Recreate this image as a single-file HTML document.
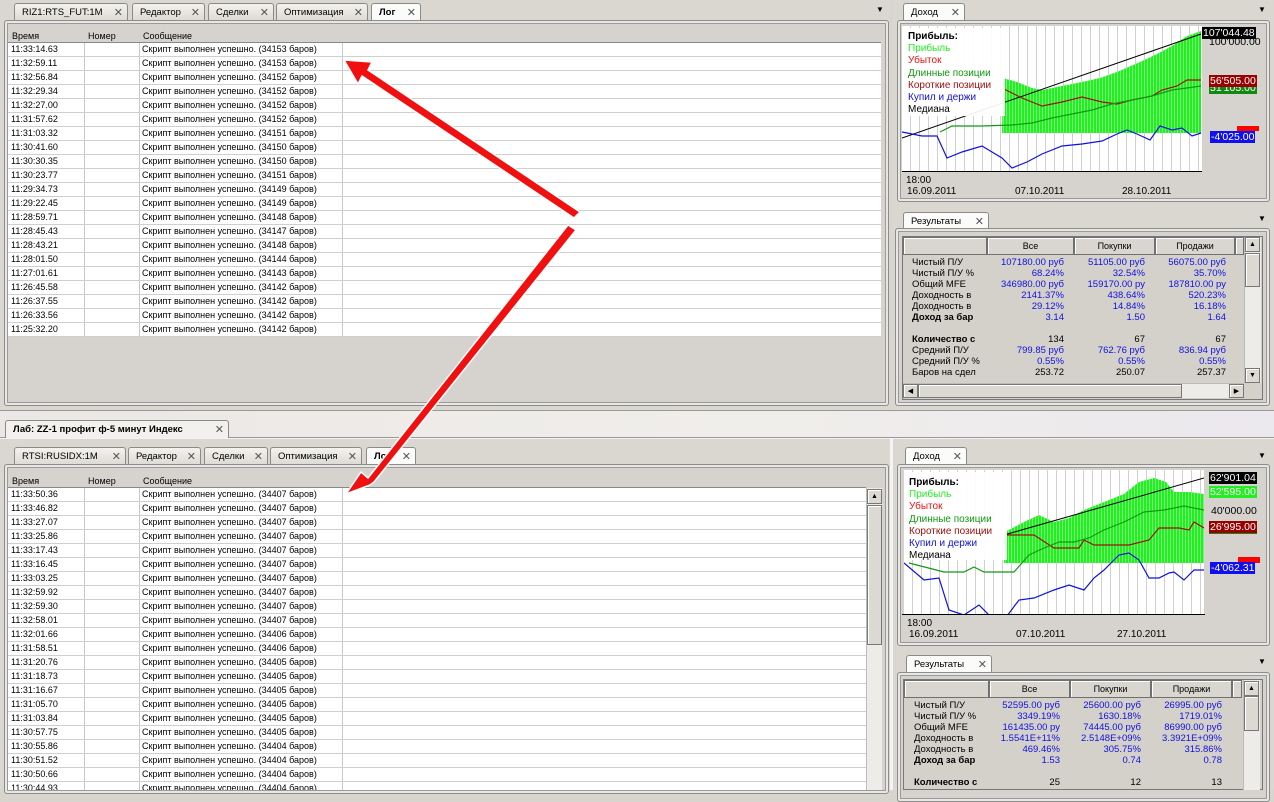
<!DOCTYPE html>
<html><head><meta charset="utf-8">
<style>
*{margin:0;padding:0;box-sizing:border-box}
body{width:1274px;height:790px;overflow:hidden;background:#d8d5cf;font-family:"Liberation Sans","DejaVu Sans",sans-serif;font-size:9px;color:#000;position:relative}
.a{position:absolute}
.tab{position:absolute;height:17px;border:1px solid #8a8a8a;border-bottom:none;border-radius:3px 3px 0 0;background:linear-gradient(#f4f2ee,#dedbd5);padding:3px 0 0 7px;font-size:9.5px;white-space:nowrap}
.tab.act{background:#fbfbfa;font-weight:bold;height:18px}
.x{position:absolute;right:4px;top:2px;font-size:11px;color:#555;font-weight:normal}
.panel{position:absolute;border:1px solid #8c8c8c;border-radius:3px;background:#d6d3ce;box-shadow:inset 0 0 0 2px #e9e7e3,inset 0 0 0 3px #9a9a9a}
.hdr{position:absolute;font-size:9px}
.rows{position:absolute;background:#fff}
.r{height:14px;border-bottom:1px solid #cfcfcf;position:relative;white-space:nowrap;line-height:13px}
.r span{position:absolute;top:0;font-size:9px}
.vl{position:absolute;top:0;bottom:0;width:1px;background:#c8c8c8}
.lbl{position:absolute;font-size:10.5px;padding:0 1px;line-height:12px;white-space:nowrap}
.res{position:absolute;font-size:9.5px;line-height:11px}
.res div{height:11px;white-space:nowrap;position:relative}
.res span{position:absolute}
.b{color:#1010e0}
.th{position:absolute;border:1px solid #707070;background:#d9d6d0;text-align:center;font-size:9px;line-height:16px;box-shadow:inset 1px 1px #fff}
.sb{position:absolute;background:#eeece8;border-left:1px solid #bbb}
.btn{position:absolute;background:#dcd9d3;border:1px solid #777;box-shadow:inset 1px 1px #fff;font-size:7px;text-align:center;line-height:13px}
</style></head><body>

<!-- TOP LEFT -->
<div class="a" style="left:0;top:0;width:890px;height:410px;background:#dad7d1"></div>
<div class="tab" style="left:14px;top:3px;width:114px">RIZ1:RTS_FUT:1M<span class="x">✕</span></div>
<div class="tab" style="left:132px;top:3px;width:73px">Редактор<span class="x">✕</span></div>
<div class="tab" style="left:208px;top:3px;width:66px">Сделки<span class="x">✕</span></div>
<div class="tab" style="left:276px;top:3px;width:92px">Оптимизация<span class="x">✕</span></div>
<div class="tab act" style="left:371px;top:3px;width:50px">Лог<span class="x">✕</span></div>
<div class="a" style="left:876px;top:5px;font-size:8px">▼</div>
<div class="panel" style="left:4px;top:20px;width:885px;height:386px"></div>
<div class="hdr" style="left:12px;top:31px">Время</div>
<div class="hdr" style="left:88px;top:31px">Номер</div>
<div class="hdr" style="left:143px;top:31px">Сообщение</div>
<div class="rows" style="left:8px;top:42px;width:873px;height:295px;border-top:1px solid #888">
<div class="vl" style="left:76px"></div><div class="vl" style="left:131px"></div><div class="vl" style="left:334px"></div>
<div class="r"><span style="left:3px">11:33:14.63</span><span style="left:134px">Скрипт выполнен успешно. (34153 баров)</span></div>
<div class="r"><span style="left:3px">11:32:59.11</span><span style="left:134px">Скрипт выполнен успешно. (34153 баров)</span></div>
<div class="r"><span style="left:3px">11:32:56.84</span><span style="left:134px">Скрипт выполнен успешно. (34152 баров)</span></div>
<div class="r"><span style="left:3px">11:32:29.34</span><span style="left:134px">Скрипт выполнен успешно. (34152 баров)</span></div>
<div class="r"><span style="left:3px">11:32:27.00</span><span style="left:134px">Скрипт выполнен успешно. (34152 баров)</span></div>
<div class="r"><span style="left:3px">11:31:57.62</span><span style="left:134px">Скрипт выполнен успешно. (34152 баров)</span></div>
<div class="r"><span style="left:3px">11:31:03.32</span><span style="left:134px">Скрипт выполнен успешно. (34151 баров)</span></div>
<div class="r"><span style="left:3px">11:30:41.60</span><span style="left:134px">Скрипт выполнен успешно. (34150 баров)</span></div>
<div class="r"><span style="left:3px">11:30:30.35</span><span style="left:134px">Скрипт выполнен успешно. (34150 баров)</span></div>
<div class="r"><span style="left:3px">11:30:23.77</span><span style="left:134px">Скрипт выполнен успешно. (34151 баров)</span></div>
<div class="r"><span style="left:3px">11:29:34.73</span><span style="left:134px">Скрипт выполнен успешно. (34149 баров)</span></div>
<div class="r"><span style="left:3px">11:29:22.45</span><span style="left:134px">Скрипт выполнен успешно. (34149 баров)</span></div>
<div class="r"><span style="left:3px">11:28:59.71</span><span style="left:134px">Скрипт выполнен успешно. (34148 баров)</span></div>
<div class="r"><span style="left:3px">11:28:45.43</span><span style="left:134px">Скрипт выполнен успешно. (34147 баров)</span></div>
<div class="r"><span style="left:3px">11:28:43.21</span><span style="left:134px">Скрипт выполнен успешно. (34148 баров)</span></div>
<div class="r"><span style="left:3px">11:28:01.50</span><span style="left:134px">Скрипт выполнен успешно. (34144 баров)</span></div>
<div class="r"><span style="left:3px">11:27:01.61</span><span style="left:134px">Скрипт выполнен успешно. (34143 баров)</span></div>
<div class="r"><span style="left:3px">11:26:45.58</span><span style="left:134px">Скрипт выполнен успешно. (34142 баров)</span></div>
<div class="r"><span style="left:3px">11:26:37.55</span><span style="left:134px">Скрипт выполнен успешно. (34142 баров)</span></div>
<div class="r"><span style="left:3px">11:26:33.56</span><span style="left:134px">Скрипт выполнен успешно. (34142 баров)</span></div>
<div class="r"><span style="left:3px">11:25:32.20</span><span style="left:134px">Скрипт выполнен успешно. (34142 баров)</span></div>
</div>

<!-- middle band -->
<div class="a" style="left:0;top:410px;width:1274px;height:28px;background:linear-gradient(90deg,#ebe7e6,#f0eeea 60%,#ebe8ee);border-top:1px solid #999;border-bottom:1px solid #999"></div>
<div class="tab act" style="left:5px;top:420px;width:224px;background:#f3f1ed">Лаб: ZZ-1 профит ф-5 минут Индекс<span class="x">✕</span></div>
<div class="a" style="left:0;top:438px;width:1274px;height:352px;background:#f5f3f4"></div>

<!-- BOTTOM LEFT -->
<div class="a" style="left:0;top:439px;width:890px;height:351px;background:#dad7d1"></div>
<div class="tab" style="left:14px;top:447px;width:112px">RTSI:RUSIDX:1M<span class="x">✕</span></div>
<div class="tab" style="left:128px;top:447px;width:73px">Редактор<span class="x">✕</span></div>
<div class="tab" style="left:204px;top:447px;width:64px">Сделки<span class="x">✕</span></div>
<div class="tab" style="left:270px;top:447px;width:92px">Оптимизация<span class="x">✕</span></div>
<div class="tab act" style="left:366px;top:447px;width:50px">Лог<span class="x">✕</span></div>
<div class="panel" style="left:4px;top:464px;width:885px;height:330px"></div>
<div class="hdr" style="left:12px;top:476px">Время</div>
<div class="hdr" style="left:88px;top:476px">Номер</div>
<div class="hdr" style="left:143px;top:476px">Сообщение</div>
<div class="rows" style="left:8px;top:487px;width:858px;height:303px;border-top:1px solid #888;overflow:hidden">
<div class="vl" style="left:76px"></div><div class="vl" style="left:131px"></div><div class="vl" style="left:334px"></div>
<div class="r"><span style="left:3px">11:33:50.36</span><span style="left:134px">Скрипт выполнен успешно. (34407 баров)</span></div>
<div class="r"><span style="left:3px">11:33:46.82</span><span style="left:134px">Скрипт выполнен успешно. (34407 баров)</span></div>
<div class="r"><span style="left:3px">11:33:27.07</span><span style="left:134px">Скрипт выполнен успешно. (34407 баров)</span></div>
<div class="r"><span style="left:3px">11:33:25.86</span><span style="left:134px">Скрипт выполнен успешно. (34407 баров)</span></div>
<div class="r"><span style="left:3px">11:33:17.43</span><span style="left:134px">Скрипт выполнен успешно. (34407 баров)</span></div>
<div class="r"><span style="left:3px">11:33:16.45</span><span style="left:134px">Скрипт выполнен успешно. (34407 баров)</span></div>
<div class="r"><span style="left:3px">11:33:03.25</span><span style="left:134px">Скрипт выполнен успешно. (34407 баров)</span></div>
<div class="r"><span style="left:3px">11:32:59.92</span><span style="left:134px">Скрипт выполнен успешно. (34407 баров)</span></div>
<div class="r"><span style="left:3px">11:32:59.30</span><span style="left:134px">Скрипт выполнен успешно. (34407 баров)</span></div>
<div class="r"><span style="left:3px">11:32:58.01</span><span style="left:134px">Скрипт выполнен успешно. (34407 баров)</span></div>
<div class="r"><span style="left:3px">11:32:01.66</span><span style="left:134px">Скрипт выполнен успешно. (34406 баров)</span></div>
<div class="r"><span style="left:3px">11:31:58.51</span><span style="left:134px">Скрипт выполнен успешно. (34406 баров)</span></div>
<div class="r"><span style="left:3px">11:31:20.76</span><span style="left:134px">Скрипт выполнен успешно. (34405 баров)</span></div>
<div class="r"><span style="left:3px">11:31:18.73</span><span style="left:134px">Скрипт выполнен успешно. (34405 баров)</span></div>
<div class="r"><span style="left:3px">11:31:16.67</span><span style="left:134px">Скрипт выполнен успешно. (34405 баров)</span></div>
<div class="r"><span style="left:3px">11:31:05.70</span><span style="left:134px">Скрипт выполнен успешно. (34405 баров)</span></div>
<div class="r"><span style="left:3px">11:31:03.84</span><span style="left:134px">Скрипт выполнен успешно. (34405 баров)</span></div>
<div class="r"><span style="left:3px">11:30:57.75</span><span style="left:134px">Скрипт выполнен успешно. (34405 баров)</span></div>
<div class="r"><span style="left:3px">11:30:55.86</span><span style="left:134px">Скрипт выполнен успешно. (34404 баров)</span></div>
<div class="r"><span style="left:3px">11:30:51.52</span><span style="left:134px">Скрипт выполнен успешно. (34404 баров)</span></div>
<div class="r"><span style="left:3px">11:30:50.66</span><span style="left:134px">Скрипт выполнен успешно. (34404 баров)</span></div>
<div class="r"><span style="left:3px">11:30:44.93</span><span style="left:134px">Скрипт выполнен успешно. (34404 баров)</span></div>
</div>
<div class="sb" style="left:866px;top:488px;width:16px;height:302px"></div>
<div class="btn" style="left:867px;top:489px;width:15px;height:15px">▲</div>
<div class="btn" style="left:867px;top:505px;width:15px;height:140px"></div>

<!-- RIGHT TOP -->
<div class="a" style="left:893px;top:0;width:381px;height:410px;background:#dad7d1"></div>
<div class="tab act" style="left:903px;top:3px;width:62px;font-weight:normal">Доход<span class="x">✕</span></div>
<div class="a" style="left:1258px;top:5px;font-size:8px">▼</div>
<div class="panel" style="left:897px;top:20px;width:373px;height:182px"></div>
<svg class="a" style="left:902px;top:26px" width="300" height="145">
<defs><pattern id="g" width="9" height="200" patternUnits="userSpaceOnUse"><rect width="9" height="200" fill="#fff"/><rect x="8" width="1" height="200" fill="#d0d0d0"/></pattern>
<pattern id="gb" width="3" height="200" patternUnits="userSpaceOnUse"><rect width="3" height="200" fill="#22ee22"/><rect x="2" width="1" height="200" fill="#77f577"/></pattern></defs>
<rect width="300" height="145" fill="url(#g)"/>
<polygon fill="url(#gb)" points="100,107 101,52 115,56 130,62 140,64 160,60 180,56 198,52 215,46 238,36 255,28 270,20 285,10 299,5 299,107"/>
<polyline fill="none" stroke="#000" points="0,112 299,8"/>
<polyline fill="none" stroke="#a01010" stroke-width="1.2" points="100,62 120,72 140,80 160,76 180,71 200,76 215,78 230,74 250,70 260,64 275,60 285,54 299,54"/>
<polyline fill="none" stroke="#119911" stroke-width="1.2" points="38,106 50,100 60,100 80,100 110,99 130,97 150,92 170,88 190,84 210,78 230,74 250,70 270,64 285,62 299,60"/>
<polyline fill="none" stroke="#1010e0" stroke-width="1.2" points="0,106 20,110 35,110 45,132 60,126 80,120 100,132 110,142 125,136 140,128 160,120 180,118 200,115 215,108 225,104 235,108 248,114 258,100 270,104 280,102 290,110 299,107"/>
<rect x="1" y="2" width="102" height="88" fill="#fff" opacity=".93"/>
</svg>
<div class="a" style="left:908px;top:31px;font-size:10px;line-height:12.2px">
<b>Прибыль:</b><br><span style="color:#22ee22">Прибыль</span><br><span style="color:#ee1111">Убыток</span><br><span style="color:#119911">Длинные позиции</span><br><span style="color:#a01010">Короткие позиции</span><br><span style="color:#1010e0">Купил и держи</span><br>Медиана</div>
<div class="lbl" style="left:1202px;top:27px;background:#000;color:#fff">107'044.48</div>
<div class="lbl" style="left:1208px;top:36px;color:#000">100'000.00</div>
<div class="lbl" style="left:1209px;top:82px;background:#118811;color:#fff">51'105.00</div>
<div class="lbl" style="left:1209px;top:75px;background:#9a0000;color:#fff">56'505.00</div>
<div class="a" style="left:1237px;top:126px;width:22px;height:5px;background:#f00"></div>
<div class="lbl" style="left:1210px;top:131px;background:#1010ee;color:#fff">-4'025.00</div>
<div class="a" style="left:902px;top:171px;width:300px;height:1px;background:#000"></div>
<div class="a" style="left:906px;top:175px;font-size:10px">18:00</div>
<div class="a" style="left:907px;top:186px;font-size:10px">16.09.2011</div>
<div class="a" style="left:1015px;top:186px;font-size:10px">07.10.2011</div>
<div class="a" style="left:1122px;top:186px;font-size:10px">28.10.2011</div>

<div class="tab act" style="left:903px;top:212px;width:86px;font-weight:normal">Результаты<span class="x">✕</span></div>
<div class="a" style="left:1258px;top:214px;font-size:8px">▼</div>
<div class="panel" style="left:895px;top:228px;width:375px;height:178px"></div>
<div class="a" style="left:902px;top:236px;width:361px;height:164px;background:#d4d1cb;border:1px solid #777"></div>
<div class="th" style="left:903px;top:237px;width:84px;height:18px"></div>
<div class="th" style="left:987px;top:237px;width:87px;height:18px">Все</div>
<div class="th" style="left:1074px;top:237px;width:81px;height:18px">Покупки</div>
<div class="th" style="left:1155px;top:237px;width:80px;height:18px">Продажи</div>
<div class="th" style="left:1235px;top:237px;width:9px;height:18px"></div>
<div class="sb" style="left:1244px;top:237px;width:17px;height:146px"></div>
<div class="btn" style="left:1245px;top:237px;width:15px;height:15px">▲</div>
<div class="btn" style="left:1245px;top:253px;width:15px;height:34px"></div>
<div class="btn" style="left:1245px;top:368px;width:15px;height:15px">▼</div>
<div class="sb" style="left:903px;top:383px;width:341px;height:15px;border-top:1px solid #bbb"></div>
<div class="btn" style="left:903px;top:384px;width:15px;height:14px">◀</div>
<div class="btn" style="left:918px;top:384px;width:264px;height:14px"></div>
<div class="btn" style="left:1229px;top:384px;width:15px;height:14px">▶</div>
<div class="res" style="left:912px;top:257px;width:330px">
<div><span style="left:0">Чистый П/У</span><span class="b" style="right:178px">107180.00 руб</span><span class="b" style="right:97px">51105.00 руб</span><span class="b" style="right:16px">56075.00 руб</span></div>
<div><span style="left:0">Чистый П/У %</span><span class="b" style="right:178px">68.24%</span><span class="b" style="right:97px">32.54%</span><span class="b" style="right:16px">35.70%</span></div>
<div><span style="left:0">Общий MFE</span><span class="b" style="right:178px">346980.00 руб</span><span class="b" style="right:97px">159170.00 ру</span><span class="b" style="right:16px">187810.00 ру</span></div>
<div><span style="left:0">Доходность в</span><span class="b" style="right:178px">2141.37%</span><span class="b" style="right:97px">438.64%</span><span class="b" style="right:16px">520.23%</span></div>
<div><span style="left:0">Доходность в</span><span class="b" style="right:178px">29.12%</span><span class="b" style="right:97px">14.84%</span><span class="b" style="right:16px">16.18%</span></div>
<div><span style="left:0"><b>Доход за бар</b></span><span class="b" style="right:178px">3.14</span><span class="b" style="right:97px">1.50</span><span class="b" style="right:16px">1.64</span></div>
<div></div>
<div><span style="left:0"><b>Количество с</b></span><span style="right:178px">134</span><span style="right:97px">67</span><span style="right:16px">67</span></div>
<div><span style="left:0">Средний П/У</span><span class="b" style="right:178px">799.85 руб</span><span class="b" style="right:97px">762.76 руб</span><span class="b" style="right:16px">836.94 руб</span></div>
<div><span style="left:0">Средний П/У %</span><span class="b" style="right:178px">0.55%</span><span class="b" style="right:97px">0.55%</span><span class="b" style="right:16px">0.55%</span></div>
<div><span style="left:0">Баров на сдел</span><span style="right:178px">253.72</span><span style="right:97px">250.07</span><span style="right:16px">257.37</span></div>
</div>

<!-- RIGHT BOTTOM -->
<div class="a" style="left:893px;top:439px;width:381px;height:351px;background:#dad7d1"></div>
<div class="tab act" style="left:905px;top:447px;width:62px;font-weight:normal">Доход<span class="x">✕</span></div>
<div class="a" style="left:1258px;top:451px;font-size:8px">▼</div>
<div class="panel" style="left:897px;top:464px;width:373px;height:182px"></div>
<svg class="a" style="left:904px;top:470px" width="300" height="144">
<rect width="300" height="144" fill="url(#g)"/>
<polygon fill="url(#gb)" points="100,93 101,62 120,52 135,45 150,52 165,48 180,40 200,32 220,24 235,12 250,8 262,12 270,22 285,22 300,24 300,93"/>
<polyline fill="none" stroke="#000" points="100,65 300,8"/>
<polyline fill="none" stroke="#a01010" stroke-width="1.2" points="100,65 130,65 150,78 175,78 180,70 190,75 225,75 245,70 255,58 275,58 285,60 290,52 300,58"/>
<polyline fill="none" stroke="#119911" stroke-width="1.2" points="5,93 40,102 60,102 70,97 80,102 110,102 125,85 140,78 155,72 170,72 185,68 200,60 220,52 240,42 260,40 280,36 300,40"/>
<polyline fill="none" stroke="#1010e0" stroke-width="1.2" points="0,93 20,110 35,108 45,140 60,145 75,135 90,150 100,150 115,130 130,128 150,120 165,115 180,120 190,108 200,100 215,85 225,83 235,90 245,108 255,108 265,103 270,102 280,110 290,100 300,100"/>
<rect x="1" y="2" width="102" height="88" fill="#fff" opacity=".93"/>
</svg>
<div class="a" style="left:909px;top:477px;font-size:10px;line-height:12.2px">
<b>Прибыль:</b><br><span style="color:#22ee22">Прибыль</span><br><span style="color:#ee1111">Убыток</span><br><span style="color:#119911">Длинные позиции</span><br><span style="color:#a01010">Короткие позиции</span><br><span style="color:#1010e0">Купил и держи</span><br>Медиана</div>
<div class="lbl" style="left:1209px;top:472px;background:#000;color:#fff">62'901.04</div>
<div class="lbl" style="left:1209px;top:486px;background:#22ee22;color:#fff">52'595.00</div>
<div class="lbl" style="left:1210px;top:505px;color:#000">40'000.00</div>
<div class="lbl" style="left:1209px;top:521px;background:#9a0000;color:#fff;border-bottom:1px solid #118811">26'995.00</div>
<div class="a" style="left:1238px;top:557px;width:22px;height:6px;background:#f00"></div>
<div class="lbl" style="left:1210px;top:562px;background:#1010ee;color:#fff">-4'062.31</div>
<div class="a" style="left:902px;top:614px;width:303px;height:1px;background:#000"></div>
<div class="a" style="left:907px;top:618px;font-size:10px">18:00</div>
<div class="a" style="left:909px;top:629px;font-size:10px">16.09.2011</div>
<div class="a" style="left:1016px;top:629px;font-size:10px">07.10.2011</div>
<div class="a" style="left:1117px;top:629px;font-size:10px">27.10.2011</div>

<div class="tab act" style="left:906px;top:655px;width:86px;font-weight:normal">Результаты<span class="x">✕</span></div>
<div class="a" style="left:1258px;top:657px;font-size:8px">▼</div>
<div class="panel" style="left:897px;top:672px;width:373px;height:130px"></div>
<div class="a" style="left:903px;top:679px;width:360px;height:111px;background:#d4d1cb;border:1px solid #777"></div>
<div class="th" style="left:904px;top:680px;width:85px;height:18px"></div>
<div class="th" style="left:989px;top:680px;width:81px;height:18px">Все</div>
<div class="th" style="left:1070px;top:680px;width:81px;height:18px">Покупки</div>
<div class="th" style="left:1151px;top:680px;width:81px;height:18px">Продажи</div>
<div class="th" style="left:1232px;top:680px;width:10px;height:18px"></div>
<div class="sb" style="left:1243px;top:680px;width:17px;height:110px"></div>
<div class="btn" style="left:1244px;top:681px;width:15px;height:15px">▲</div>
<div class="btn" style="left:1244px;top:696px;width:15px;height:35px"></div>
<div class="res" style="left:914px;top:700px;width:330px">
<div><span style="left:0">Чистый П/У</span><span class="b" style="right:184px">52595.00 руб</span><span class="b" style="right:103px">25600.00 руб</span><span class="b" style="right:22px">26995.00 руб</span></div>
<div><span style="left:0">Чистый П/У %</span><span class="b" style="right:184px">3349.19%</span><span class="b" style="right:103px">1630.18%</span><span class="b" style="right:22px">1719.01%</span></div>
<div><span style="left:0">Общий MFE</span><span class="b" style="right:184px">161435.00 ру</span><span class="b" style="right:103px">74445.00 руб</span><span class="b" style="right:22px">86990.00 руб</span></div>
<div><span style="left:0">Доходность в</span><span class="b" style="right:184px">1.5541E+11%</span><span class="b" style="right:103px">2.5148E+09%</span><span class="b" style="right:22px">3.3921E+09%</span></div>
<div><span style="left:0">Доходность в</span><span class="b" style="right:184px">469.46%</span><span class="b" style="right:103px">305.75%</span><span class="b" style="right:22px">315.86%</span></div>
<div><span style="left:0"><b>Доход за бар</b></span><span class="b" style="right:184px">1.53</span><span class="b" style="right:103px">0.74</span><span class="b" style="right:22px">0.78</span></div>
<div></div>
<div><span style="left:0"><b>Количество с</b></span><span style="right:184px">25</span><span style="right:103px">12</span><span style="right:22px">13</span></div>
</div>

<!-- red arrows -->
<svg class="a" style="left:0;top:0" width="1274" height="790">
<g fill="#f01010" stroke="#fff" stroke-width="1.5">
<polygon points="580,212 368,70 372,62 344,60 358,84 362,76 574,218"/>
<polygon points="568,225 368,478 361,472 346,494 370,485 374,482 576,230"/>
</g>
</svg>
</body></html>
